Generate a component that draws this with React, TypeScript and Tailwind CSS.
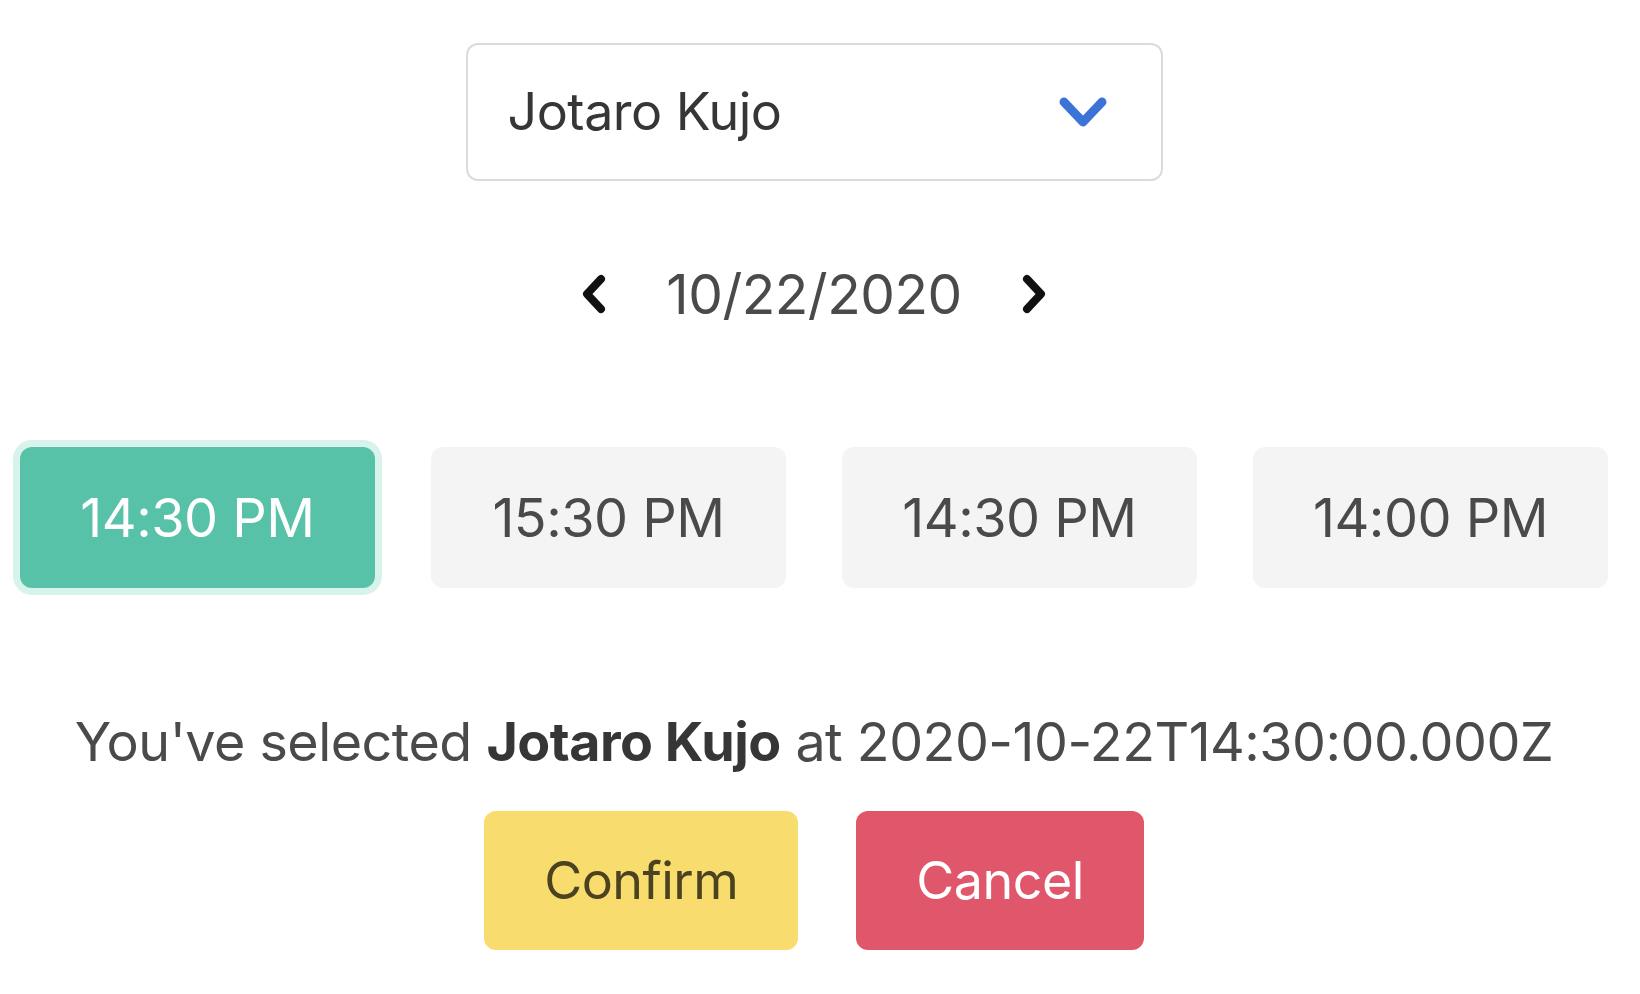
const slots = [
  { label: "14:30 PM", selected: true },
  { label: "15:30 PM", selected: false },
  { label: "14:30 PM", selected: false },
  { label: "14:00 PM", selected: false },
];

const Chevron = ({ dir }: { dir: "left" | "right" }) => (
  <svg width="28" height="40" viewBox="0 0 28 40" fill="none">
    <polyline
      points={dir === "left" ? "21,5 7,20 21,35" : "7,5 21,20 7,35"}
      stroke="#111"
      strokeWidth="8"
      strokeLinecap="round"
      strokeLinejoin="round"
    />
  </svg>
);

export default function App() {
  return (
    <div
      className="min-h-screen bg-white pt-[43px] pl-[20px] pr-[32px]"
      style={{ fontFamily: "Inter, 'Noto Sans', sans-serif" }}
    >
      <div className="flex flex-col items-center">
        {/* select */}
        <div className="w-[697px] h-[138px] border-2 border-[#dbdbdb] rounded-[12px] flex items-center justify-between pl-[40px] pr-[54px]">
          <span className="text-[52px] text-[#363636] tracking-[-0.5px]">Jotaro Kujo</span>
          <svg width="48" height="32" viewBox="0 0 48 32" fill="none">
            <polyline
              points="5,6 24,26 43,6"
              stroke="#3b73d6"
              strokeWidth="9"
              strokeLinecap="round"
              strokeLinejoin="round"
            />
          </svg>
        </div>

        {/* date nav */}
        <div className="mt-[83px] h-[60px] flex items-center gap-[58px]">
          <Chevron dir="left" />
          <span className="text-[55px] text-[#4a4a4a] tracking-[-0.5px]">10/22/2020</span>
          <Chevron dir="right" />
        </div>

        {/* time slots */}
        <div className="mt-[123px] w-full grid grid-cols-4 gap-[56px]">
          {slots.map((s, i) =>
            s.selected ? (
              <div
                key={i}
                className="h-[141px] rounded-[12px] bg-[#58c2a8] ring-[7px] ring-[#d7f3ec] flex items-center justify-center text-[54px] text-white tracking-[-0.5px]"
              >
                {s.label}
              </div>
            ) : (
              <div
                key={i}
                className="h-[141px] rounded-[12px] bg-[#f4f4f4] flex items-center justify-center text-[54px] text-[#4a4a4a] tracking-[-0.5px]"
              >
                {s.label}
              </div>
            )
          )}
        </div>

        {/* summary */}
        <p className="mt-[122px] text-[53.8px] leading-[64px] text-[#4a4a4a] tracking-[-0.5px]">
          You've selected <strong className="font-bold text-[#363636]">Jotaro Kujo</strong> at
          2020-10-22T14:30:00.000Z
        </p>

        <div className="mt-[37px] flex gap-[58px]">
          <button className="h-[139px] px-[60px] rounded-[12px] bg-[#f9dc6e] text-[52px] text-[#4b4221] tracking-[-0.5px]">
            Confirm
          </button>
          <button className="h-[139px] px-[60px] rounded-[12px] bg-[#e0566a] text-[52px] text-white tracking-[-0.5px]">
            Cancel
          </button>
        </div>
      </div>
    </div>
  );
}
